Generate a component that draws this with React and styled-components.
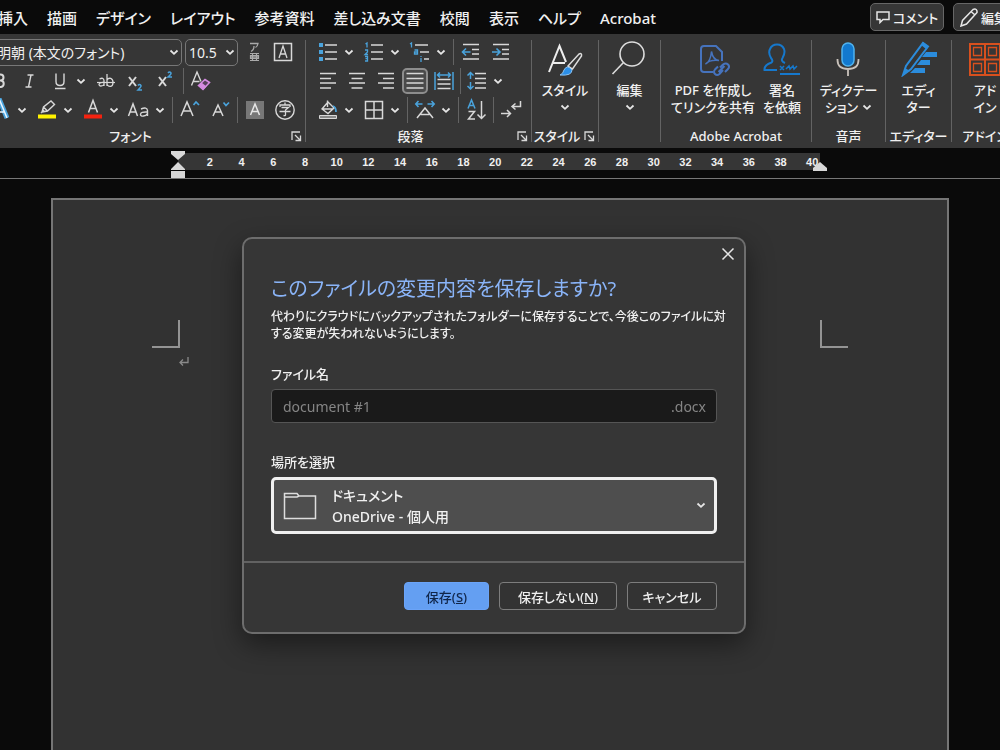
import React, { useState } from "react";
import styled, { createGlobalStyle, css } from "styled-components";

const GlobalStyle = createGlobalStyle`
  * {
    box-sizing: border-box;
  }

  body {
    margin: 0;
    background: #0a0a0a;
    color: #f0f0f0;
    font-family: "Noto Sans", "Noto Sans CJK JP", sans-serif;
    font-size: 13px;
    font-feature-settings: "palt";
  }

  button,
  input,
  select {
    font: inherit;
    font-feature-settings: inherit;
    color: inherit;
  }

  svg {
    display: block;
    flex: none;
    fill: none;
  }
`;

const LIGHT = "#d8d8d8";
const BLUE = "#4aa3dc";

/* ---------- shell ---------- */

const Shell = styled.div`
  display: flex;
  flex-direction: column;
  height: 100vh;
  overflow: hidden;
`;

const plainButton = css`
  display: flex;
  align-items: center;
  justify-content: center;
  padding: 0;
  border: none;
  background: none;
`;

/* ---------- tab bar ---------- */

const TabBar = styled.header`
  display: flex;
  flex: none;
  align-items: center;
  justify-content: space-between;
  height: 34px;
  margin: 0 -60px 0 -2px;
`;

const Tabs = styled.nav`
  display: flex;
  gap: 19px;
  padding-top: 1px;
`;

const Tab = styled.button`
  ${plainButton}
  font-size: 15px;
  font-weight: 500;
  line-height: 24px;
  white-space: nowrap;
`;

const TabActions = styled.div`
  display: flex;
  gap: 9px;
`;

const ActionButton = styled.button`
  ${plainButton}
  gap: 3px;
  width: ${({ $wide }) => ($wide ? 107 : 74)}px;
  height: 28px;
  padding-left: ${({ $wide }) => ($wide ? 6 : 0)}px;
  justify-content: ${({ $wide }) => ($wide ? "flex-start" : "center")};
  border: 1px solid #666;
  border-radius: 5px;
  background: #363636;
  font-size: 13px;
  font-weight: 500;
  white-space: nowrap;
`;

/* ---------- ribbon ---------- */

const Ribbon = styled.div`
  display: flex;
  flex: none;
  height: 114px;
  margin: 0 -60px 0 -28px;
  background: #363636;
`;

const Group = styled.section`
  display: flex;
  flex: none;
  flex-direction: column;
  width: ${({ $width }) => $width}px;
  padding: 5px 0 2px;
  gap: 3px;
`;

const GroupDivider = styled.div`
  flex: none;
  align-self: center;
  width: 1px;
  height: 102px;
  background: #636363;
`;

const Row = styled.div`
  display: flex;
  align-items: center;
  gap: ${({ $gap = 4 }) => $gap}px;
  height: 26px;
  padding-left: ${({ $indent = 0 }) => $indent}px;
`;

const RowDivider = styled.div`
  width: 1px;
  height: 26px;
  background: #636363;
`;

const GroupLabel = styled.div`
  display: flex;
  align-items: center;
  margin-top: auto;
  padding-right: ${({ $launcher }) => ($launcher ? 2 : 0)}px;
  font-weight: 500;
  line-height: 20px;
  white-space: nowrap;

  span {
    flex: 1;
    text-align: center;
  }
`;

const LauncherButton = styled.button`
  ${plainButton}
  width: 14px;
  height: 14px;
`;

const ToolButton = styled.button`
  ${plainButton}
  width: 26px;
  height: 26px;
  border-radius: 5px;
  ${({ $active }) =>
    $active &&
    css`
      border: 2px solid #8d8d8d;
      background: #4a4a4a;
    `}
`;

const Split = styled.div`
  display: flex;
  align-items: center;
`;

const CaretButton = styled.button`
  ${plainButton}
  width: 16px;
  height: 26px;
`;

const Combo = styled.label`
  display: flex;
  align-items: center;
  width: ${({ $width }) => $width}px;
  height: 27px;
  padding: 0 2px 0 ${({ $indent }) => $indent}px;
  border: 1px solid #777;
  border-radius: 5px;

  select {
    flex: 1;
    min-width: 0;
    padding: 0;
    border: none;
    outline: none;
    background: none;
    appearance: none;
    font-size: 14px;
  }
`;

const BigTools = styled.div`
  display: flex;
  justify-content: center;
  gap: 8px;
`;

const BigButton = styled.button`
  ${plainButton}
  flex-direction: column;
  justify-content: flex-start;
  font-weight: 500;
  line-height: 17px;
  white-space: nowrap;

  > svg {
    margin-bottom: 5px;
  }

  > span {
    display: flex;
    align-items: center;
    gap: 4px;
  }
`;

const BelowCaret = styled.span`
  height: 17px;
`;

function Caret() {
  return (
    <svg width="10" height="7" viewBox="0 0 10 7">
      <path d="M1.5 1.5L5 4.8l3.500-3.300" stroke="#e6e6e6" strokeWidth="1.8" />
    </svg>
  );
}

function Launcher({ label }) {
  return (
    <LauncherButton aria-label={label}>
      <svg width="11" height="11" viewBox="0 0 11 11" stroke={LIGHT} strokeWidth="1.3">
        <path d="M1 9V1h8M4 4l5 5M9.5 4.5v5h-5" />
      </svg>
    </LauncherButton>
  );
}

/* Small 24px ribbon drawings, keyed by tool */
const glyphs = {
  ruby: (
    <>
      <path d="M8 3.5h8q-.5 3-2.5 4M12 6q0 4-3 5.5" stroke="#aaa" strokeWidth="1.3" />
      <path d="M8 13.5h9M8 20.5h9M10.5 13.5v7M14.5 13.5v7M8.5 15.5h8v3h-8z" fill="#888" stroke="#aaa" strokeWidth="1.2" />
    </>
  ),
  boxedA: (
    <>
      <path d="M3.5 3.5h17v17h-17z" stroke={LIGHT} strokeWidth="1.5" />
      <path d="M8 18l4-12 4 12M9.5 14h5" stroke={LIGHT} strokeWidth="1.3" />
    </>
  ),
  bold: <path d="M8 5.5h4.5a3 3 0 0 1 0 6H8zM8 11.5h5a3.3 3.3 0 0 1 0 6.5H8z" stroke={LIGHT} strokeWidth="2" />,
  italic: <path d="M9.5 6h6M7.5 18h6M13 6l-2.5 12" stroke={LIGHT} strokeWidth="1.4" />,
  underline: <path d="M8 4.5v8q0 4 4 4t4-4v-8M7 19.5h10.5" stroke={LIGHT} strokeWidth="1.4" />,
  strike: (
    <>
      <path d="M5.5 10q4-2 4.5 1.5V17M10 13.5c-6-.5-6 3.5-3 3.5q2 0 3-1.5M13 5v12M13 11c2-3 6-2 6 2.5s-4 5-6 2" stroke={LIGHT} strokeWidth="1.3" />
      <path d="M3 13.5h18" stroke={LIGHT} strokeWidth="1.2" />
    </>
  ),
  subscript: (
    <>
      <path d="M5 8l7 9M12 8l-7 9" stroke={LIGHT} strokeWidth="2" />
      <path d="M14 16.5q1.5-2 3 0 .5 1-3 4.5h4" stroke={BLUE} strokeWidth="1.5" />
    </>
  ),
  superscript: (
    <>
      <path d="M5 8l7 9M12 8l-7 9" stroke={LIGHT} strokeWidth="2" />
      <path d="M14 4q1.5-2 3 0 .5 1-3 4h4" stroke={BLUE} strokeWidth="1.5" />
    </>
  ),
  clear: (
    <>
      <path d="M2.5 16.5L8 3l4 9.5M4.5 12.5h6" stroke={LIGHT} strokeWidth="1.4" />
      <path d="M9.5 16.5l6.5-6 4.5 3-6.5 7z" fill="#58405c" stroke="#d48be0" strokeWidth="1.6" />
      <path d="M9.5 16.5l3-3 5 4-3 3z" fill="#d48be0" />
    </>
  ),
  effects: (
    <>
      <path d="M4 20l7-17 7 17" stroke={BLUE} strokeWidth="5" />
      <path d="M4 20l7-17 7 17M7 14h8" stroke="#eaf6ff" strokeWidth="1.5" />
    </>
  ),
  marker: (
    <>
      <path d="M3 16.5h18v4H3z" fill="#fff200" />
      <path d="M7 14l1.5-5L16 3l3.5 3.5L12.5 13zM8.5 9l4 4M6 15l3-3" stroke={LIGHT} strokeWidth="1.4" />
    </>
  ),
  color: (
    <>
      <path d="M3 16.5h18v4H3z" fill="#f5220f" />
      <path d="M7.5 14.5l4.500-12 4.5 12M9 10.5h6" stroke={LIGHT} strokeWidth="1.5" />
    </>
  ),
  textCase: (
    <>
      <path d="M1.5 18l4.5-12 4.5 12M3 14h6" stroke={LIGHT} strokeWidth="1.5" />
      <path d="M14 11q6-2.5 6.5 1.5v5.5M20.5 14q-7-.5-7 2.5c0 2.5 5.5 2 7-1" stroke={LIGHT} strokeWidth="1.4" />
    </>
  ),
  grow: (
    <>
      <path d="M3 18L9 4l6 14M5 13h8" stroke={LIGHT} strokeWidth="1.5" />
      <path d="M15.5 7l2.5-3 3 3" stroke={BLUE} strokeWidth="1.7" />
    </>
  ),
  shrink: (
    <>
      <path d="M5 18l5-11 5 11M7 14h6" stroke={LIGHT} strokeWidth="1.5" />
      <path d="M15.5 4.5l2.5 3 3-3" stroke={BLUE} strokeWidth="1.7" />
    </>
  ),
  shading: (
    <>
      <path d="M3 3h18v18H3z" fill="#777" />
      <path d="M7.5 17L12 6l4.5 11M9 13.5h6" stroke="#e6e6e6" strokeWidth="1.5" />
    </>
  ),
  enclosed: (
    <>
      <circle cx="12" cy="12" r="9.2" stroke={LIGHT} strokeWidth="1.4" />
      <path d="M12 4.5v2M7 9V7h10v2M8.5 9.5h7L12.5 12v5q0 1-2 .5M6.5 13.5h11" stroke={LIGHT} strokeWidth="1.3" />
    </>
  ),
  bullets: (
    <>
      <path d="M9 5h12M9 12h12M9 19h12" stroke={LIGHT} strokeWidth="1.6" />
      <path d="M3 3h4v4H3zM3 10h4v4H3zM3 17h4v4H3z" fill={BLUE} />
    </>
  ),
  numbers: (
    <>
      <path d="M9 5h12M9 12h12M9 19h12" stroke={LIGHT} strokeWidth="1.6" />
      <path d="M3.5 4l1.5-1v4.5M3 10h2.5v2L3 14.5h3M3 16.5h2.5v4.5H3M3.5 18.7h2" stroke={BLUE} strokeWidth="1.3" />
    </>
  ),
  multilevel: (
    <>
      <path d="M7 5h13M12 12h9M16 19h5" stroke={LIGHT} strokeWidth="1.6" />
      <path d="M2 4l1.5-1v4.5M6.5 10h3v4h-3v-2h3M13 16v1M13 18v4" stroke={BLUE} strokeWidth="1.3" />
    </>
  ),
  outdent: (
    <>
      <path d="M4 4.5h16M13 9.5h7M13 14h7M4 19h16" stroke={LIGHT} strokeWidth="1.6" />
      <path d="M11.5 12H4M7 8.5L3.5 12 7 15.5" stroke={BLUE} strokeWidth="1.6" />
    </>
  ),
  indent: (
    <>
      <path d="M4 4.5h16M13 9.5h7M13 14h7M4 19h16" stroke={LIGHT} strokeWidth="1.6" />
      <path d="M3 12h7.5M7.5 8.5L11 12l-3.5 3.5" stroke={BLUE} strokeWidth="1.6" />
    </>
  ),
  left: <path d="M4 4.5h16M4 9.5h11M4 14h16M4 19h11" stroke={LIGHT} strokeWidth="1.6" />,
  center: <path d="M4 4.5h16M6.5 9.5h11M4 14h16M6.5 19h11" stroke={LIGHT} strokeWidth="1.6" />,
  right: <path d="M4 4.5h16M9 9.5h11M4 14h16M9 19h11" stroke={LIGHT} strokeWidth="1.6" />,
  justify: <path d="M3.5 4.5h17M3.5 9.5h17M3.5 14h17M3.5 19h17" stroke={LIGHT} strokeWidth="1.6" />,
  distribute: (
    <>
      <path d="M5.5 10.5h13M5.5 15h13M5.5 19.5h13" stroke={LIGHT} strokeWidth="1.6" />
      <path d="M3 3v18M21 3v18M5.5 6h13M8 3.5L5.5 6 8 8.5M16 3.5L18.5 6 16 8.5" stroke={BLUE} strokeWidth="1.5" />
    </>
  ),
  spacing: (
    <>
      <path d="M10 4.5h11M10 9.5h11M10 14h11M10 19h11" stroke={LIGHT} strokeWidth="1.6" />
      <path d="M5.5 10V3.5M2.5 6.5l3-3 3 3M5.5 13v7M2.5 17l3 3 3-3" stroke={BLUE} strokeWidth="1.5" />
    </>
  ),
  fill: (
    <>
      <path d="M3.5 17.5h17v3h-17z" fill="#888" stroke={LIGHT} />
      <path d="M6 11l6-7 6 6-6 5.5zM7 11h10M11.5 9V2.5" stroke={LIGHT} strokeWidth="1.4" />
      <path d="M17 8q3 1 3 6" stroke={BLUE} strokeWidth="1.8" />
    </>
  ),
  borders: <path d="M3.5 3.5h17v17h-17zM12 3.5v17M3.5 12h17" stroke={LIGHT} strokeWidth="1.5" />,
  scale: (
    <>
      <path d="M4 20l8-10 8 10M7.5 16.5h9" stroke={LIGHT} strokeWidth="1.5" />
      <path d="M9.5 6H3M5.5 3L2.8 6l2.7 3M14.5 6H21M18.5 3l2.7 3-2.7 3" stroke={BLUE} strokeWidth="1.6" />
    </>
  ),
  sort: (
    <>
      <path d="M4 10.5L7.5 2 11 10.5M5.5 7.5h4" stroke={BLUE} strokeWidth="1.5" />
      <path d="M4.5 13.5h6L4.5 21h6.5M17.5 3v17.5M13.5 16.5l4 4 4-4" stroke={LIGHT} strokeWidth="1.5" />
    </>
  ),
  marks: <path d="M21.5 3v5.5h-8M16.5 5.5l-3.5 3 3.5 3M2 15.5h9.5M8 12l3.5 3.5L8 19" stroke={LIGHT} strokeWidth="1.5" />,
};

function Tool({ name, label, active }) {
  return (
    <ToolButton aria-label={label} $active={active}>
      <svg width="24" height="24" viewBox="0 0 24 24">
        {glyphs[name]}
      </svg>
    </ToolButton>
  );
}

function SplitTool({ name, label }) {
  return (
    <Split>
      <Tool name={name} label={label} />
      <CaretButton aria-label={`${label}のオプション`}>
        <Caret />
      </CaretButton>
    </Split>
  );
}

function FontGroup() {
  return (
    <Group $width={333}>
      <Row $gap={3}>
        <Combo $width={210} $indent={10}>
          <select aria-label="フォント名">
            <option>游明朝 (本文のフォント)</option>
          </select>
          <Caret />
        </Combo>
        <Combo $width={53} $indent={3}>
          <select aria-label="フォント サイズ">
            <option>10.5</option>
          </select>
          <Caret />
        </Combo>
        <Tool name="ruby" label="ルビ" />
        <Tool name="boxedA" label="囲み線" />
      </Row>
      <Row $indent={15}>
        <Tool name="bold" label="太字" />
        <Tool name="italic" label="斜体" />
        <SplitTool name="underline" label="下線" />
        <Tool name="strike" label="取り消し線" />
        <Tool name="subscript" label="下付き" />
        <Tool name="superscript" label="上付き" />
        <RowDivider />
        <Tool name="clear" label="書式のクリア" />
      </Row>
      <Row $indent={16}>
        <SplitTool name="effects" label="文字の効果" />
        <SplitTool name="marker" label="蛍光ペン" />
        <SplitTool name="color" label="フォントの色" />
        <SplitTool name="textCase" label="文字種の変換" />
        <RowDivider />
        <Tool name="grow" label="拡大" />
        <Tool name="shrink" label="縮小" />
        <RowDivider />
        <Tool name="shading" label="文字の網かけ" />
        <Tool name="enclosed" label="囲い文字" />
      </Row>
      <GroupLabel $launcher>
        <span>フォント</span>
        <Launcher label="フォントの設定" />
      </GroupLabel>
    </Group>
  );
}

function ParagraphGroup() {
  return (
    <Group $width={225}>
      <Row $indent={9}>
        <SplitTool name="bullets" label="箇条書き" />
        <SplitTool name="numbers" label="段落番号" />
        <SplitTool name="multilevel" label="アウトライン" />
        <RowDivider />
        <Tool name="outdent" label="インデントを減らす" />
        <Tool name="indent" label="インデントを増やす" />
      </Row>
      <Row $indent={9} $gap={3}>
        <Tool name="left" label="左揃え" />
        <Tool name="center" label="中央揃え" />
        <Tool name="right" label="右揃え" />
        <Tool name="justify" label="両端揃え" active />
        <Tool name="distribute" label="均等割り付け" />
        <RowDivider />
        <SplitTool name="spacing" label="行間" />
      </Row>
      <Row $indent={9}>
        <SplitTool name="fill" label="塗りつぶし" />
        <SplitTool name="borders" label="罫線" />
        <RowDivider />
        <SplitTool name="scale" label="拡張書式" />
        <RowDivider />
        <Tool name="sort" label="並べ替え" />
        <RowDivider />
        <Tool name="marks" label="編集記号" />
      </Row>
      <GroupLabel $launcher>
        <span>段落</span>
        <Launcher label="段落の設定" />
      </GroupLabel>
    </Group>
  );
}

function StylesIcon() {
  return (
    <svg width="38" height="38" viewBox="0 0 38 38">
      <path d="M3 33L13.5 7 20 23M7 24h12" stroke="#eee" strokeWidth="2" />
      <path d="M22 27L33 15q3-1.5 2.5 2L26.500 30z" stroke="#ddd" strokeWidth="1.5" />
      <path d="M14 36q3-1 4-5 3-6 8 0 0 6-12 5z" fill="#2b8fe8" stroke="#8cc4f4" />
    </svg>
  );
}

function SearchIcon() {
  return (
    <svg width="38" height="38" viewBox="0 0 38 38" stroke="#ddd" strokeWidth="1.6">
      <circle cx="21" cy="15" r="12" />
      <path d="M12.5 23.5L1.500 35" />
    </svg>
  );
}

function PdfIcon() {
  return (
    <svg width="34" height="38" viewBox="0 0 34 38" stroke="#4673bd" strokeWidth="2">
      <path d="M17 33H8q-3 0-3-3V10q0-3 3-3h12l6 6v9" />
      <path d="M9.5 25q5-2 6-12.5Q17 21 23 21.5 14 20.5 9.5 25z" strokeWidth="1.5" />
      <path d="M24 28.5l3-3q3-2 5 0t0 4.5l-3 3M27 31l-3.5 4q-2.5 2-4.5 0t0-4.5l3-3M22.500 33l6-6" />
    </svg>
  );
}

function SignIcon() {
  return (
    <svg width="38" height="38" viewBox="0 0 38 38" stroke="#1678cc" strokeWidth="2">
      <path d="M14 31H1.500q-.5-5 7-7.5 2-1.5-.5-4.5-3-5-1-9 2-4.5 7-4.5t7 4.5q1.500 4-1.500 9-2 3 2.500 5" />
      <path d="M17 35h20" />
      <path d="M17 27l4 4M21 27l-4 4M23 30l3-3 1 3 3-3 1 3 3-3" strokeWidth="1.5" />
    </svg>
  );
}

function MicIcon() {
  return (
    <svg width="26" height="38" viewBox="0 0 26 38">
      <rect x="7" y="4" width="12" height="23" rx="6" fill="#1279cf" stroke="#4fb3ef" strokeWidth="1.5" />
      <path d="M2.500 20v1q0 9 10.500 9t10.500-9v-1M13 30v7" stroke="#c9c2bb" strokeWidth="1.8" />
    </svg>
  );
}

function EditorIcon() {
  return (
    <svg width="38" height="38" viewBox="0 0 38 38">
      <path d="M26 13h11v5H22zM21 21h9v5H17zM15 29h10v5H10z" fill="#2b8cdc" />
      <path d="M3 36l3-9L23 4l5 3.500L11 30z" fill="#363636" stroke="#2b8cdc" strokeWidth="2" />
      <path d="M3 36l2-7 5 3zM23 3l5 4-2 3-5-4z" fill="#2b8cdc" />
    </svg>
  );
}

function AddinsIcon() {
  return (
    <svg width="34" height="38" viewBox="0 0 34 38" stroke="#d8501e">
      <path d="M2 5h30v31H2zM17 5v31M2 20.500h30" strokeWidth="2" />
      <path d="M5.500 8.500h8v8h-8zM20.500 8.500h8v8h-8zM5.500 24.500h8v8h-8zM20.500 24.500h8v8h-8z" strokeWidth="1.300" />
    </svg>
  );
}

const bigGroups = [
  { width: 66, label: "スタイル", launcher: true, tools: [{ icon: <StylesIcon />, lines: ["スタイル"], below: true }] },
  { width: 61, label: "", tools: [{ icon: <SearchIcon />, lines: ["編集"], below: true }] },
  {
    width: 150,
    label: "Adobe Acrobat",
    tools: [
      { icon: <PdfIcon />, lines: ["PDF を作成し", "てリンクを共有"] },
      { icon: <SignIcon />, lines: ["署名", "を依頼"] },
    ],
  },
  { width: 73, label: "音声", tools: [{ icon: <MicIcon />, lines: ["ディクテー", "ション"], inline: true }] },
  { width: 65, label: "エディター", tools: [{ icon: <EditorIcon />, lines: ["エディ", "ター"] }] },
  { width: 66, label: "アドイン", tools: [{ icon: <AddinsIcon />, lines: ["アド", "イン"] }] },
];

function BigTool({ icon, lines, below, inline }) {
  return (
    <BigButton>
      {icon}
      {lines.map((line, i) => (
        <span key={line}>
          {line}
          {inline && i === lines.length - 1 && <Caret />}
        </span>
      ))}
      {below && (
        <BelowCaret>
          <Caret />
        </BelowCaret>
      )}
    </BigButton>
  );
}

/* ---------- ruler and page ---------- */

const Ruler = styled.div`
  flex: none;
  height: 31px;
  padding: 5px 180px 0 178px;
  border-bottom: 1px solid #777;
`;

const RulerStrip = styled.div`
  position: relative;
  height: 17px;
  background: #363636;
`;

const RulerNumbers = styled.div`
  display: flex;
  margin: 0 -8px 0 16px;
  font-family: "Liberation Sans", sans-serif;
  font-size: 11px;
  font-weight: 700;
  line-height: 18px;

  span {
    flex: 1;
    text-align: center;
  }
`;

const Marker = styled.svg`
  position: absolute;
  top: -2px;
  ${({ $side }) => $side}: -7px;
`;

const Page = styled.main`
  flex: 1;
  margin: 19px 51px 0;
  padding: 120px 99px 0;
  border: 2px solid #757575;
  border-bottom: none;
  background: #323232;
`;

const MarginMarks = styled.div`
  display: flex;
  justify-content: space-between;
`;

const MarginMark = styled.div`
  width: 28px;
  height: 28px;
  border-bottom: 2px solid #949494;
  border-${({ $side }) => $side}: 2px solid #949494;
`;

const ParagraphMark = styled.svg`
  margin: 8px 0 0 26px;
`;

const rulerNumbers = Array.from({ length: 20 }, (_, i) => (i + 1) * 2);

/* ---------- dialog ---------- */

const Overlay = styled.div`
  position: fixed;
  inset: 0;
  display: flex;
  align-items: flex-start;
  justify-content: center;
  padding: 237px 12px 0 0;
`;

const Dialog = styled.form`
  position: relative;
  width: 504px;
  border: 2px solid #6d6d6d;
  border-radius: 10px;
  background: #363636;
  box-shadow: 0 10px 28px rgba(0, 0, 0, 0.45);
`;

const CloseButton = styled.button`
  ${plainButton}
  position: absolute;
  top: 5px;
  right: 6px;
  width: 20px;
  height: 20px;
`;

const DialogBody = styled.div`
  padding: 35px 27px 27px;

  h1 {
    margin: 0;
    color: #8ab4f8;
    font-size: 20px;
    font-weight: 400;
    line-height: 30px;
    white-space: nowrap;
  }

  p {
    margin: 4px 0 22px;
    line-height: 17px;
    font-size: 12px;
    font-weight: 500;
    white-space: nowrap;
  }
`;

const FieldLabel = styled.label`
  display: block;
  margin-bottom: 5px;
  font-weight: 500;
  line-height: 20px;
`;

const FileName = styled.div`
  display: flex;
  align-items: center;
  height: 34px;
  margin-bottom: 29px;
  padding: 0 10px;
  border: 1px solid #555;
  border-radius: 4px;
  background: #1a1a1a;
  color: #858585;
  font-size: 14px;

  input {
    flex: 1;
    min-width: 0;
    padding: 0 1px;
    border: none;
    outline: none;
    background: none;
  }
`;

const Location = styled.div`
  display: flex;
  align-items: center;
  gap: 15px;
  height: 57px;
  padding: 0 8px 0 9px;
  border: 3px solid #f0f0f0;
  border-radius: 5px;
  background: #4e4e4e;
`;

const LocationText = styled.div`
  display: flex;
  flex: 1;
  flex-direction: column;
  font-size: 14px;
  font-weight: 500;
  line-height: 21px;

  select {
    height: 21px;
    padding: 0;
    border: none;
    outline: none;
    background: none;
    appearance: none;
  }
`;

const DialogFooter = styled.div`
  display: flex;
  justify-content: flex-end;
  gap: 10px;
  padding: 19px 27px 22px;
  border-top: 2px solid #626262;
`;

const DialogButton = styled.button`
  width: ${({ $width }) => $width}px;
  height: 28px;
  padding: 0;
  border: 1px solid ${({ $primary }) => ($primary ? "#6ba4f8" : "#7d7d7d")};
  border-radius: 4px;
  background: ${({ $primary }) => ($primary ? "#649ff2" : "#333")};
  color: ${({ $primary }) => ($primary ? "#10264a" : "#f0f0f0")};
  font-weight: 500;
`;

function SaveDialog() {
  const [fileName, setFileName] = useState("document #1");

  return (
    <Overlay>
      <Dialog role="dialog" aria-labelledby="save-title" onSubmit={(e) => e.preventDefault()}>
        <CloseButton type="button" aria-label="閉じる">
          <svg width="14" height="14" viewBox="0 0 14 14" stroke="#e6e6e6" strokeWidth="1.5">
            <path d="M1.5 1.5l11 11M12.5 1.5l-11 11" />
          </svg>
        </CloseButton>
        <DialogBody>
          <h1 id="save-title">このファイルの変更内容を保存しますか?</h1>
          <p>
            代わりにクラウドにバックアップされたフォルダーに保存することで、今後このファイルに対
            <br />
            する変更が失われないようにします。
          </p>
          <FieldLabel htmlFor="file-name">ファイル名</FieldLabel>
          <FileName>
            <input
              id="file-name"
              type="text"
              value={fileName}
              onChange={(e) => setFileName(e.target.value)}
            />
            <span>.docx</span>
          </FileName>
          <FieldLabel htmlFor="location">場所を選択</FieldLabel>
          <Location>
            <svg width="34" height="28" viewBox="0 0 34 28" stroke="#ddd" strokeWidth="1.5">
              <path d="M1.5 1.5h12.5l2 2.5h16.5v22.5h-31zM1.5 5h12.5l2-1" />
            </svg>
            <LocationText>
              <select id="location">
                <option>ドキュメント</option>
              </select>
              <span>OneDrive - 個人用</span>
            </LocationText>
            <Caret />
          </Location>
        </DialogBody>
        <DialogFooter>
          <DialogButton $primary $width={85}>
            保存(<u>S</u>)
          </DialogButton>
          <DialogButton type="button" $width={118}>
            保存しない(<u>N</u>)
          </DialogButton>
          <DialogButton type="button" $width={90}>
            キャンセル
          </DialogButton>
        </DialogFooter>
      </Dialog>
    </Overlay>
  );
}

const tabs = [
  "挿入",
  "描画",
  "デザイン",
  "レイアウト",
  "参考資料",
  "差し込み文書",
  "校閲",
  "表示",
  "ヘルプ",
  "Acrobat",
];

export default function App() {
  return (
    <Shell>
      <GlobalStyle />
      <TabBar>
        <Tabs>
          {tabs.map((tab) => (
            <Tab key={tab}>{tab}</Tab>
          ))}
        </Tabs>
        <TabActions>
          <ActionButton>
            <svg width="14" height="14" viewBox="0 0 14 14" stroke="#e6e6e6" strokeWidth="1.5">
              <path d="M1 2h12v7.5H7L4 12.5v-3H1z" />
            </svg>
            コメント
          </ActionButton>
          <ActionButton $wide>
            <svg width="18" height="20" viewBox="0 0 18 20" stroke="#e6e6e6" strokeWidth="1.5">
              <path d="M1 19l1.5-5.5L13 2.5q3-1.5 4 1.5v1.5L6.500 17zM11 4.500l4 3.500" />
            </svg>
            編集
          </ActionButton>
        </TabActions>
      </TabBar>
      <Ribbon>
        <FontGroup />
        <GroupDivider />
        <ParagraphGroup />
        {bigGroups.map(({ width, label, launcher, tools }) => (
          <React.Fragment key={label}>
            <GroupDivider />
            <Group $width={width}>
              <BigTools>
                {tools.map((tool) => (
                  <BigTool key={tool.lines[0]} {...tool} />
                ))}
              </BigTools>
              {label && (
                <GroupLabel $launcher={launcher}>
                  <span>{label}</span>
                  {launcher && <Launcher label={`${label}の設定`} />}
                </GroupLabel>
              )}
            </Group>
          </React.Fragment>
        ))}
      </Ribbon>
      <Ruler>
        <RulerStrip>
          <RulerNumbers>
            {rulerNumbers.map((n) => (
              <span key={n}>{n}</span>
            ))}
          </RulerNumbers>
          <Marker $side="left" width="14" height="28" viewBox="0 0 14 28">
            <path d="M0 0h14v3L7 9 0 3zM0 18l7-7 7 7v1H0zM0 20h14v7H0z" fill="#d8d8d8" />
          </Marker>
          <Marker $side="right" width="14" height="28" viewBox="0 0 14 28">
            <path d="M0 20v-3l7-6 7 6v3z" fill="#d8d8d8" />
          </Marker>
        </RulerStrip>
      </Ruler>
      <Page>
        <MarginMarks>
          <MarginMark $side="right" />
          <MarginMark $side="left" />
        </MarginMarks>
        <ParagraphMark width="12" height="12" viewBox="0 0 12 12" stroke="#8a8a8a" strokeWidth="1.3">
          <path d="M10 1v5.5H2M5 3.5l-3 3 3 3" />
        </ParagraphMark>
      </Page>
      <SaveDialog />
    </Shell>
  );
}
